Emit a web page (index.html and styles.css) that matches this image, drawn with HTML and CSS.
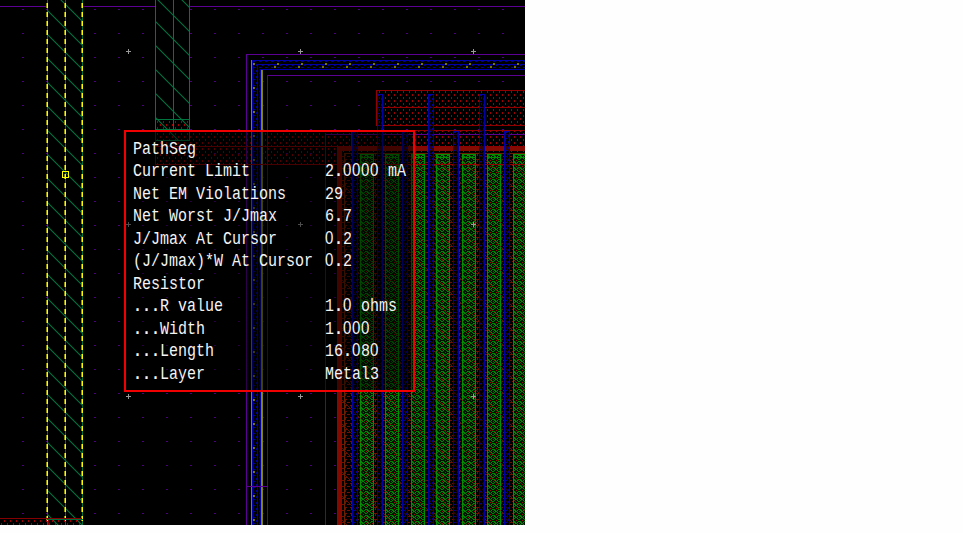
FILE: index.html
```html
<!DOCTYPE html>
<html lang="en">
<head>
<meta charset="utf-8">
<title>Layout viewer</title>
<link rel="stylesheet" href="styles.css">
</head>
<body>
<main class="viewer">
<svg class="layout" width="525" height="525" viewBox="0 0 525 525" shape-rendering="crispEdges">
  <defs>
    <pattern id="grid" x="22" y="9" width="24" height="24" patternUnits="userSpaceOnUse"><path d="M0 0h2v1H0z" fill="#4a007c"/></pattern>
    <pattern id="hatch" x="47" y="10" width="24" height="24" patternUnits="userSpaceOnUse"><path d="M-1-1L25 25M-1 23L1 25M23-1L25 1" stroke="#007040" stroke-width="1.1" shape-rendering="auto"/></pattern>
    <pattern id="hatch2" x="157" y="23" width="24" height="24" patternUnits="userSpaceOnUse"><path d="M-1-1L25 25M-1 23L1 25M23-1L25 1" stroke="#007040" stroke-width="1.1" shape-rendering="auto"/></pattern>
    <pattern id="red" width="6" height="6" patternUnits="userSpaceOnUse"><path d="M1 1h1v2H1zM4 4h1v2H4z" fill="#a00000"/></pattern>
    <pattern id="mesh" x="338" y="146" width="6" height="6" patternUnits="userSpaceOnUse"><path d="M0 1h3v1H0zM3 4h3v1H3zM1 2h1v2H1z" fill="#760d00"/></pattern>
    <pattern id="diag" x="338" y="132" width="24" height="24" patternUnits="userSpaceOnUse"><path d="M-1-1L25 25" stroke="#861900" shape-rendering="auto"/></pattern>
    <pattern id="green" x="0" y="1" width="6" height="6" patternUnits="userSpaceOnUse"><path d="M0 0h2v1h1v1h1V1h1V0h1v1H5v1H4v1h1v1h1v1H5V4H4V3H2v1H1v1H0V4h1V3h1V2H1V1H0z" fill="#008600"/><path d="M3 5h1v1H3zM0 2h1v1H0z" fill="#971500"/></pattern>
    <pattern id="blue" width="6" height="6" patternUnits="userSpaceOnUse"><path d="M1 1h2v1H1zM4 4h1v2H4z" fill="#000099"/></pattern>
    <pattern id="pinsA" x="253" y="63" width="24" height="24" patternUnits="userSpaceOnUse"><path d="M0 0h2v2H0z" fill="#777700"/></pattern>
    <pattern id="pinsB" x="274" y="66" width="24" height="24" patternUnits="userSpaceOnUse"><path d="M0 0h2v2H0z" fill="#777700"/></pattern>
    <g id="cross"><path d="M-2 0h5v1h-5zM0-2h1v5H0z" fill="#999"/></g>
    <g id="finger"><path d="M0 0h14v400H0z" fill="#001500"/><path d="M0 0h14v400H0z" fill="url(#green)"/><path d="M.5 400V.5h13V400M0 3.500h14" fill="none" stroke="#009000"/></g>
    <g id="rail"><path d="M0 0h6v440H0z" fill="#000" fill-opacity=".6"/><path d="M0 0h6v440H0z" fill="url(#blue)"/><path d="M.5 440V.5h5V440" fill="none" stroke="#0000a8"/></g>
  </defs>
  <rect width="525" height="525" fill="#000"/>
  <rect width="525" height="525" fill="url(#grid)"/>
  <path d="M0 6.500H525" stroke="#5b0093"/>

  <rect x="47" width="36" height="525" fill="#000"/>
  <rect x="47" width="36" height="525" fill="url(#hatch)"/>
  <path d="M47.500 0V525M65.500 0V525M82.500 0V525" stroke="#006b3c"/>
  <path d="M46.500 3V525M64.500 3V525M81.500 3V525" stroke="#8e8e00" stroke-dasharray="5 4"/>
  <path d="M47.500 3V525M65.500 3V525M82 3V525" stroke="#ff0" stroke-dasharray="5 4"/>
  <rect x="62.500" y="171.500" width="6" height="6" fill="none" stroke="#ff0"/>
  <rect y="518" width="82" height="7" fill="url(#red)"/>
  <path d="M0 518H82M48.500 519V525" stroke="#850000"/>
  <path d="M47 519.500H83" stroke="#006b3c"/>

  <rect x="155" width="35" height="129" fill="#000"/>
  <path d="M155 119h35v11h335v34H155z" fill="url(#red)"/>
  <rect x="155" width="35" height="140" fill="url(#hatch2)"/>
  <path d="M155.500 0V140.500H189.500V0M173 0V129M155 119.500H190M155 129.500H190" fill="none" stroke="#00753f"/>

  <path d="M252 525V60H525V70H262V525z" fill="#000"/>
  <path d="M252 525V60H525V70H262V525z" fill="url(#blue)"/>
  <path d="M252.500 525V60.500H525M257.500 525V64.500H525M260.500 525V69.500H525" fill="none" stroke="#0000a8"/>
  <rect x="253" y="63" width="272" height="3" fill="url(#pinsA)"/>
  <rect x="253" y="66" width="3" height="459" fill="url(#pinsA)"/>
  <rect x="270" y="66" width="255" height="3" fill="url(#pinsB)"/>
  <path d="M250.500 60h1.500V525h-1.500zM261 70h1.500V525H261z" fill="#858500"/>
  <path d="M246.500 525V54.500H525M267.500 525V75.500H525M247 486.500H268" fill="none" stroke="#5b0093"/>

  <rect x="377" y="91" width="148" height="35" fill="#000"/>
  <rect x="377" y="91" width="148" height="35" fill="url(#red)"/>
  <path d="M525 90.500H376.500V125.500H525M377 107H525" fill="none" stroke="#900000"/>
  <path d="M325.500 525V134.500H525" fill="none" stroke="#5b0093"/>

  <rect x="342" y="152" width="183" height="373" fill="#000"/>
  <rect x="342" y="146" width="183" height="379" fill="url(#mesh)"/>
  <use href="#finger" x="360" y="154"/><use href="#finger" x="385" y="154"/><use href="#finger" x="411" y="154"/><use href="#finger" x="436" y="154"/><use href="#finger" x="462" y="154"/><use href="#finger" x="487" y="154"/><use href="#finger" x="513" y="154"/>
  <rect x="342" y="155" width="183" height="370" fill="url(#diag)" opacity=".7"/>
  <path d="M337 146H525V151H342V525H337z" fill="#820a00"/>
  <path d="M344.500 525V153.500H525" fill="none" stroke="#682000"/>
  <path d="M155 130H525M155.500 130V164M155 146H525M155 164H525M351.500 130V146" stroke="#900000"/>
  <use href="#rail" x="352" y="131"/><use href="#rail" x="377" y="94"/><use href="#rail" x="402" y="131"/><use href="#rail" x="428" y="94"/><use href="#rail" x="453" y="131"/><use href="#rail" x="479" y="94"/><use href="#rail" x="504" y="131"/>

  <use href="#cross" x="128" y="51"/><use href="#cross" x="300" y="51"/><use href="#cross" x="473" y="51"/>
  <use href="#cross" x="128" y="224"/><use href="#cross" x="300" y="224"/><use href="#cross" x="473" y="224"/>
  <use href="#cross" x="128" y="396"/><use href="#cross" x="300" y="396"/><use href="#cross" x="473" y="396"/>
</svg>
<section class="tip">
  <dl class="rows">
    <dt>PathSeg</dt><dd></dd>
    <dt>Current Limit</dt><dd>2<i>.</i><b>0000</b> mA</dd>
    <dt>Net EM Violations</dt><dd>29</dd>
    <dt>Net Worst J/Jmax</dt><dd>6<i>.</i>7</dd>
    <dt>J/Jmax At Cursor</dt><dd><b>0</b><i>.</i>2</dd>
    <dt>(J/Jmax)*W At Cursor</dt><dd><b>0</b><i>.</i>2</dd>
    <dt>Resistor</dt><dd></dd>
    <dt><i>...</i>R value</dt><dd>1<i>.</i><b>0</b> ohms</dd>
    <dt><i>...</i>Width</dt><dd>1<i>.</i><b>000</b></dd>
    <dt><i>...</i>Length</dt><dd>16<i>.</i><b>0</b>8<b>0</b></dd>
    <dt><i>...</i>Layer</dt><dd>Metal3</dd>
  </dl>
</section>
</main>
</body>
</html>
```
FILE: styles.css
```css
body {
  margin: 0;
  background: #fefefe;
  overflow: hidden;
}

.viewer {
  position: relative;
  width: 525px;
  height: 525px;
  overflow: hidden;
}

.layout {
  display: block;
}

.tip {
  position: absolute;
  left: 124px;
  top: 130px;
  box-sizing: border-box;
  width: 291px;
  height: 262px;
  border: 2px solid #f00000;
  background: rgba(0, 0, 0, 0.5);
  padding: 5.5px 0 0 6.5px;
}

/* Tall, narrow terminal face */
.rows {
  display: grid;
  grid-template-columns: 240px 120px;
  grid-auto-rows: 22.5px;
  margin: 0;
  width: 360px;
  transform: scaleX(0.8);
  transform-origin: 0 0;
  font: 18.75px/22.5px "Liberation Mono", monospace;
  color: #f4f4f4;
  white-space: pre;
}

.rows dt,
.rows dd {
  margin: 0;
}

/* Plain zeros, without the inner dot */
.rows b {
  font-family: "Liberation Sans", sans-serif;
  font-weight: 400;
  line-height: 0;
  letter-spacing: 0.82px;
}

.rows i {
  font-style: normal;
  font-weight: 700;
  line-height: 0;
}
```
